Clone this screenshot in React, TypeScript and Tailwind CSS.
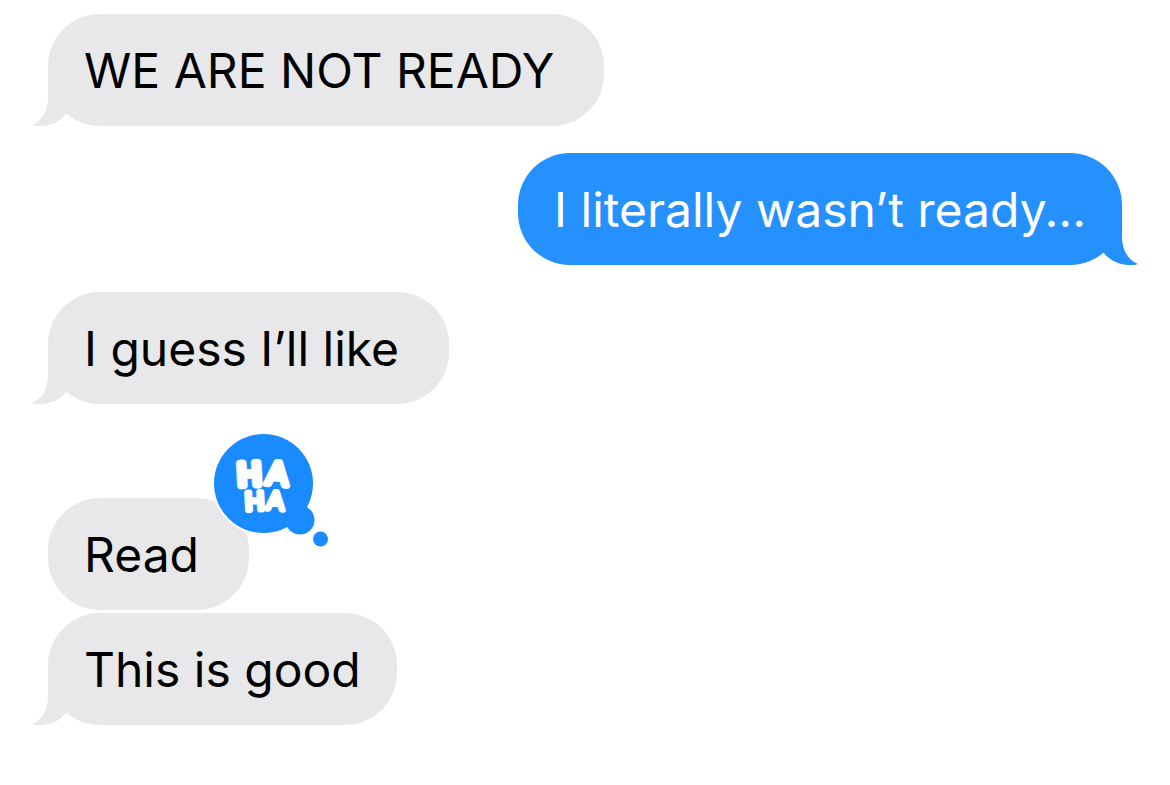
import type { ReactNode } from "react";
import clsx from "clsx";

type BubbleProps = {
  sent?: boolean;
  tail?: boolean;
  roomy?: boolean;
  children: ReactNode;
};

function Tail({ sent }: { sent?: boolean }) {
  return (
    <svg
      aria-hidden="true"
      viewBox="0 0 52 56"
      className={clsx(
        "absolute bottom-0 h-14 w-[52px]",
        sent ? "-right-4 -scale-x-100 fill-[#2591ff]" : "-left-4 fill-[#e8e8ea]",
      )}
    >
      <path d="M16 0V27C16 41 10 51 0 55C2 56 5 56 9 56C19 56 29 51 35 43L52 30V0Z" />
    </svg>
  );
}

function Bubble({ sent, tail, roomy, children }: BubbleProps) {
  return (
    <div
      className={clsx(
        "relative rounded-[52px] pt-[21px] pb-[19px] pl-9 text-[48px] leading-[72px]",
        sent ? "bg-[#2591ff] text-white" : "bg-[#e8e8ea] text-black",
        roomy ? "pr-[50px]" : "pr-9",
      )}
    >
      {tail && <Tail sent={sent} />}
      <p className="relative">{children}</p>
    </div>
  );
}

function HahaReaction() {
  return (
    <svg
      role="img"
      aria-label="Haha reaction"
      viewBox="0 0 118 118"
      className="absolute -top-[66px] left-[164px] size-[118px]"
    >
      <circle cx="51.5" cy="51.5" r="51.5" fill="#fff" />
      <g fill="#1a8aff">
        <circle cx="51.5" cy="51.5" r="49.5" />
        <circle cx="88" cy="88" r="14.5" />
        <circle cx="108.5" cy="107" r="7.5" />
      </g>
      <g
        fill="#fff"
        stroke="#fff"
        strokeLinejoin="round"
        fontFamily="Lato, sans-serif"
        fontWeight="400"
      >
        <text x="25.5" y="53" fontSize="31" strokeWidth="7.5" transform="rotate(-3 38 42)">H</text>
        <text x="54.5" y="53" fontSize="32" strokeWidth="6" transform="rotate(5 66 42)">A</text>
        <text x="33" y="78" fontSize="25" strokeWidth="5.5" transform="rotate(-3 43 70)">H</text>
        <text x="54.5" y="78" fontSize="26" strokeWidth="4.5" transform="rotate(4 65 70)">A</text>
      </g>
    </svg>
  );
}

export default function App() {
  return (
    <main className="min-h-screen bg-white px-12 pt-3.5 pb-15 font-['Inter',sans-serif]">
      <ul className="flex flex-col items-start gap-[27px]">
        <li>
          <Bubble tail roomy>WE ARE NOT READY</Bubble>
        </li>
        <li className="self-end">
          <Bubble sent tail>I literally wasn’t ready...</Bubble>
        </li>
        <li>
          <Bubble tail roomy>I guess I’ll like</Bubble>
        </li>
        <li className="mt-[67px] flex flex-col items-start gap-[3px]">
          <div className="relative">
            <Bubble roomy>Read</Bubble>
            <HahaReaction />
          </div>
          <Bubble tail>This is good</Bubble>
        </li>
      </ul>
    </main>
  );
}
